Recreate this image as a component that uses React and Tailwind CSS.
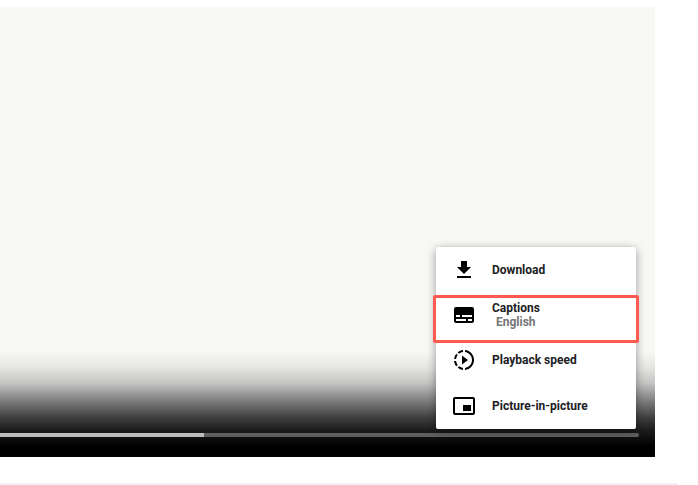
import React from 'react';

const MenuIcon = ({ d }) => (
  <svg viewBox="0 0 24 24" className="w-6 h-6 fill-black shrink-0">
    <path d={d} />
  </svg>
);

const items = [
  { label: 'Download', d: 'M19 9h-4V3H9v6H5l7 7 7-7zM5 18v2h14v-2H5z', h: 'h-[46px]' },
  {
    label: 'Captions',
    sub: 'English',
    d: 'M20 4H4c-1.1 0-2 .9-2 2v12c0 1.1.9 2 2 2h16c1.1 0 2-.9 2-2V6c0-1.1-.9-2-2-2zM4 12h4v2H4v-2zm10 6H4v-2h10v2zm6 0h-4v-2h4v2zm0-4H10v-2h10v2z',
    h: 'h-[44px]',
  },
  {
    label: 'Playback speed',
    d: 'M10 7.5v9l6-4.5zM11 4.07V2.05c-2.01.2-3.84 1-5.32 2.21L7.1 5.69A7.941 7.941 0 0 1 11 4.07zM5.69 7.1L4.26 5.68A9.95 9.95 0 0 0 2.05 11h2.02c.18-1.46.76-2.79 1.62-3.9zM4.07 13H2.05c.2 2.01 1 3.84 2.21 5.32l1.43-1.43A7.868 7.868 0 0 1 4.07 13zm1.61 6.74A9.981 9.981 0 0 0 11 21.95v-2.02a7.941 7.941 0 0 1-3.9-1.62l-1.42 1.43zM22 12c0 5.16-3.92 9.42-8.95 9.95v-2.02C16.97 19.41 20 16.05 20 12s-3.03-7.41-6.95-7.93V2.05C18.08 2.58 22 6.84 22 12z',
    h: 'h-[46px]',
  },
  {
    label: 'Picture-in-picture',
    d: 'M19 11h-8v6h8v-6zm4 8V4.98C23 3.88 22.1 3 21 3H3c-1.1 0-2 .88-2 1.98V19c0 1.1.9 2 2 2h18c1.1 0 2-.9 2-2zm-2 .02H3V4.97h18v14.05z',
    h: 'h-[46px]',
  },
];

const App = () => {
  return (
    <div className="w-[698px] h-[485px] bg-white overflow-hidden flex flex-col pt-[7px] font-['Roboto',sans-serif]">
      {/* Video */}
      <div className="relative w-[655px] h-[450px] shrink-0 bg-[#f8f8f6] flex flex-col justify-end">
        <div className="h-[107px] bg-[linear-gradient(to_bottom,#f8f8f6_0%,#e6e6e5_16%,#c4c4c3_31%,#808080_47%,#404040_63%,#1c1c1c_75%,#000000_90%)] flex flex-col justify-end pb-5">
          {/* Progress bar */}
          <div className="w-[639px] h-1 bg-[#5f5f5f] rounded-r-sm">
            <div className="w-[204px] h-1 bg-[#bcbcbc]" />
          </div>
        </div>

        {/* Settings menu */}
        <div className="absolute left-[436px] top-[240px] w-[200px] h-[182px] bg-white rounded-[2px] shadow-[0_2px_10px_rgba(0,0,0,0.4)] flex flex-col">
          {items.map(item => (
            <div key={item.label} className={`${item.h} flex items-center pl-4 gap-[16px]`}>
              <MenuIcon d={item.d} />
              <div className="text-xs leading-[14px] font-bold text-[#202124]">
                <div>{item.label}</div>
                {item.sub && <div className="pl-[4px] text-[#757575]">{item.sub}</div>}
              </div>
            </div>
          ))}
        </div>

        {/* Highlight around Captions */}
        <div className="absolute left-[433px] top-[288px] w-[206px] h-[48px] border-[3px] border-[#ff5a4f] rounded-[2px]" />
      </div>

      <div className="flex-1" />
      <div className="w-[678px] h-[2px] bg-[#f1f0f6]" />
    </div>
  );
};

export default App;
